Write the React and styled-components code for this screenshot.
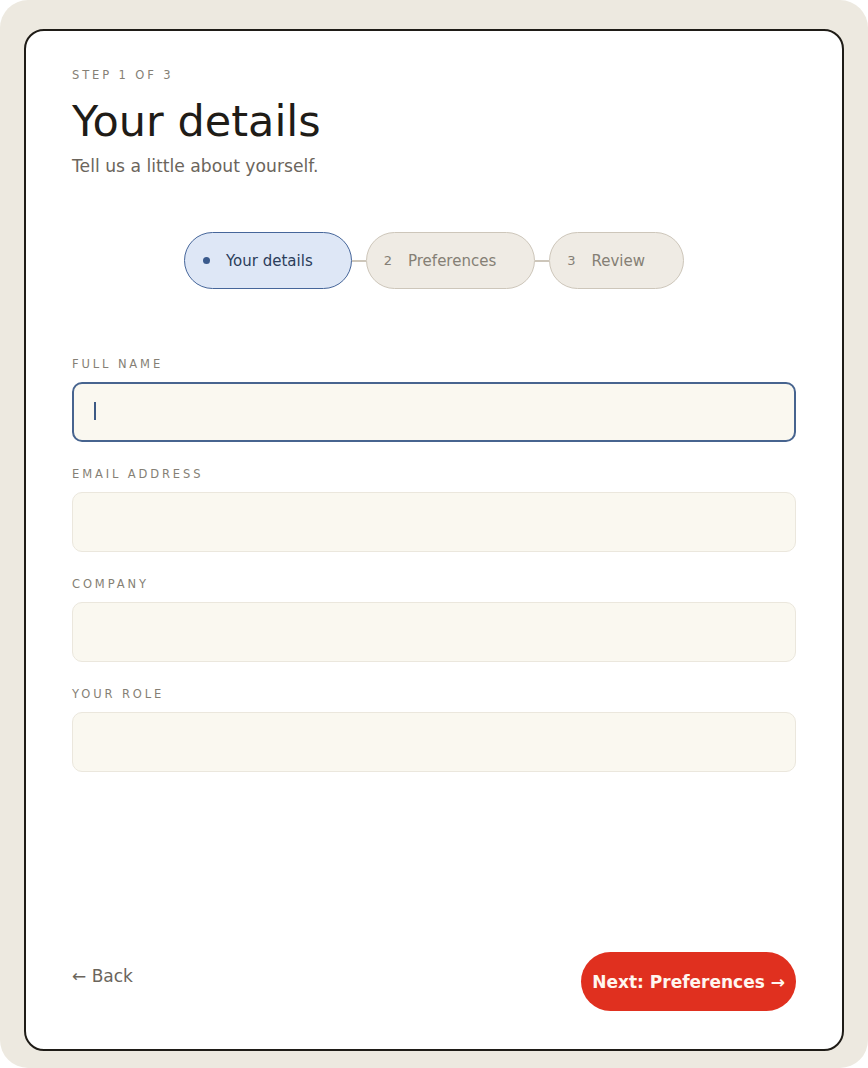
import React from 'react';
import styled, { createGlobalStyle } from 'styled-components';

const steps = [
  { num: 1, label: 'Your details' },
  { num: 2, label: 'Preferences' },
  { num: 3, label: 'Review' },
];

const fields = [
  { id: 'name', label: 'Full name', focused: true },
  { id: 'email', label: 'Email address' },
  { id: 'company', label: 'Company' },
  { id: 'role', label: 'Your role' },
];

const App = () => {
  const current = 1;

  return (
    <>
      <GlobalStyle />
      <Page>
        <Card>
          <Eyebrow>Step 1 of 3</Eyebrow>
          <Title>Your details</Title>
          <Lead>Tell us a little about yourself.</Lead>

          <Stepper>
            {steps.map((step, idx) => (
              <React.Fragment key={step.num}>
                {idx > 0 && <Connector />}
                <Pill $active={step.num === current}>
                  {step.num === current ? <Dot /> : <StepNum>{step.num}</StepNum>}
                  {step.label}
                </Pill>
              </React.Fragment>
            ))}
          </Stepper>

          <Fields>
            {fields.map((field) => (
              <Field key={field.id}>
                <Label htmlFor={field.id}>{field.label}</Label>
                <InputWrap>
                  <Input id={field.id} type="text" $focused={field.focused} />
                  {field.focused && <Caret />}
                </InputWrap>
              </Field>
            ))}
          </Fields>

          <Footer>
            <BackButton>← Back</BackButton>
            <NextButton>Next: Preferences →</NextButton>
          </Footer>
        </Card>
      </Page>
    </>
  );
};

export default App;

const GlobalStyle = createGlobalStyle`
  body {
    margin: 0;
    background: #ffffff;
    font-family: "DejaVu Sans", "Noto Sans", sans-serif;
  }
`;

const Page = styled.div`
  width: 868px;
  height: 1068px;
  box-sizing: border-box;
  padding: 29px 24px 17px;
  display: flex;
  background: #ede9e0;
  border-radius: 28px;
`;

const Card = styled.div`
  flex: 1;
  display: flex;
  flex-direction: column;
  background: #ffffff;
  border: 2px solid #1f1c17;
  border-radius: 20px;
  padding: 37px 46px 38px;
`;

const Eyebrow = styled.p`
  margin: 0;
  font-size: 11.5px;
  line-height: 14px;
  letter-spacing: 0.25em;
  text-transform: uppercase;
  color: #857f75;
`;

const Title = styled.h1`
  margin: 14px 0 0;
  font-size: 43px;
  font-weight: 400;
  line-height: 1.2;
  color: #1f1c17;
`;

const Lead = styled.p`
  margin: 6px 0 0;
  font-size: 17.2px;
  line-height: 1.5;
  color: #6b655c;
`;

const Stepper = styled.div`
  margin-top: 53px;
  display: flex;
  justify-content: center;
  align-items: center;
`;

const Pill = styled.div`
  height: 57px;
  box-sizing: border-box;
  display: flex;
  align-items: center;
  gap: 16px;
  padding: 0 38px 0 17px;
  border-radius: 999px;
  font-size: 15px;
  border: 1.5px solid ${({ $active }) => ($active ? '#46669a' : '#cdc6ba')};
  background: ${({ $active }) => ($active ? '#dee7f6' : '#efebe4')};
  color: ${({ $active }) => ($active ? '#2b3d5a' : '#857f75')};
`;

const Dot = styled.span`
  width: 7px;
  height: 7px;
  margin-left: 1px;
  border-radius: 50%;
  background: #3a5a8c;
`;

const StepNum = styled.span`
  font-size: 13px;
`;

const Connector = styled.span`
  width: 14px;
  height: 1.5px;
  background: #cdc6ba;
`;

const Fields = styled.div`
  margin-top: 68px;
  display: flex;
  flex-direction: column;
  gap: 25px;
`;

const Field = styled.div`
  display: flex;
  flex-direction: column;
  gap: 11px;
`;

const Label = styled.label`
  font-size: 11.5px;
  line-height: 14px;
  letter-spacing: 0.25em;
  text-transform: uppercase;
  color: #857f75;
`;

const InputWrap = styled.div`
  position: relative;
`;

const Input = styled.input`
  width: 100%;
  height: 60px;
  box-sizing: border-box;
  padding: 0 20px;
  border-radius: 10px;
  background: #faf8f0;
  border: ${({ $focused }) => ($focused ? '2px solid #47648f' : '1px solid #ebe7dd')};
  font-family: inherit;
  font-size: 16px;
  color: #1f1c17;
  caret-color: transparent;
  outline: none;
`;

const Caret = styled.span`
  position: absolute;
  left: 22px;
  top: 20px;
  width: 2px;
  height: 18px;
  background: #3d5a85;
`;

const Footer = styled.div`
  margin-top: auto;
  display: flex;
  justify-content: space-between;
  align-items: center;
`;

const BackButton = styled.button`
  margin-bottom: 12px;
  padding: 0;
  border: none;
  background: none;
  font-family: inherit;
  font-size: 17px;
  color: #6b655c;
  cursor: pointer;
`;

const NextButton = styled.button`
  height: 59px;
  padding: 0 11px;
  border: none;
  border-radius: 999px;
  background: #e0301f;
  color: #fff6ef;
  font-family: inherit;
  font-size: 17px;
  font-weight: 700;
  cursor: pointer;
`;
